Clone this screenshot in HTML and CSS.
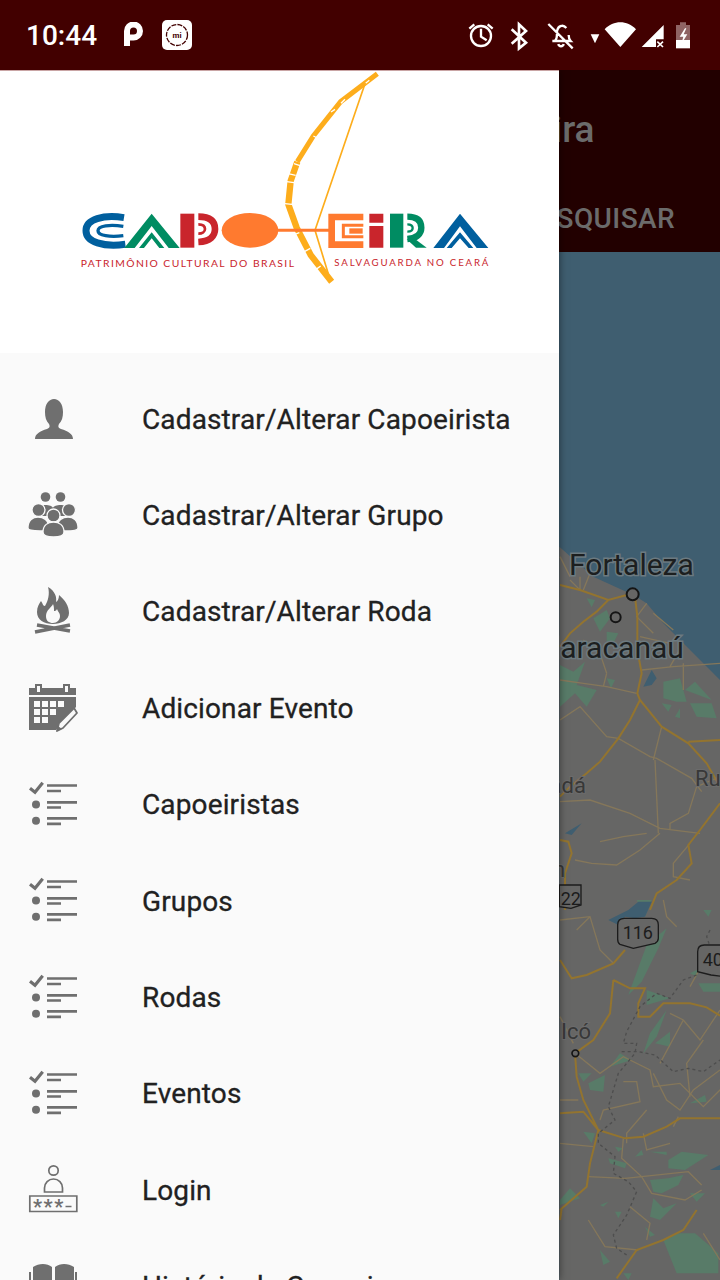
FILE: index.html
```html
<!DOCTYPE html>
<html lang="pt-BR">
  <head>
    <meta charset="UTF-8" />
    <meta name="viewport" content="width=device-width, initial-scale=1.0" />
    <title>Capoeira</title>
    <link rel="stylesheet" href="styles.css">
  </head>
  <body>
    <div class="phone">
      <!-- Status bar -->
      <div class="status-bar">
        <span class="clock">10:44</span>
        <svg class="p-icon" viewBox="0 0 20 26"><path d="M4 24V9a6.500 6.500 0 1 1 6.500 6.500H7" fill="none" stroke="#fff" stroke-width="6"/></svg>
        <svg class="mi-icon" viewBox="0 0 30 30">
          <rect width="30" height="30" rx="5" fill="#fff"/>
          <circle cx="15" cy="15" r="10.500" fill="none" stroke="#420000" stroke-width="1.300" stroke-dasharray="5 1.200"/>
          <text x="15" y="18" class="mi-text">mi</text>
        </svg>
        <svg class="status-icons" viewBox="0 0 840 210">
          <g fill="none" stroke="#fff" stroke-width="7">
            <circle cx="123" cy="108" r="30"/>
            <path d="M123 86v24l17 11M88 86l15-13M143 73l15 13"/>
            <path d="M215 88l43 40-21 17V73l21 20-43 38" stroke-width="8"/>
            <path d="M345 122c8-6 5-18 6-28 2-12 8-15 12-16 3-1 10-1 16 6M386 105c0 7 1 13 6 18H337M355 132c2 9 14 9 16 0M325 72l73 73"/>
          </g>
          <path d="M452 103h26l-13 27zM494 88c26-28 68-28 94 0l-47 53zM605 141l66-66v43h-23v23z" fill="#fff"/>
          <path d="M652 125l17 16M669 125l-17 16" stroke="#fff" stroke-width="5"/>
          <path d="M720 67h18v8h12v45h-42V75h12z" fill="#8f6464"/>
          <path d="M708 120h42v25h-42z" fill="#fff"/>
          <path d="M735 85l-16 25h11l-6 22 18-29h-11l8-18z" fill="#fff"/>
        </svg>
      </div>

      <div class="screen">
        <!-- App bar behind the drawer -->
        <header class="app-bar">
          <h1 class="app-title">Capoeira</h1>
          <div class="tabs"><span>PESQUISAR</span></div>
        </header>

        <!-- Map, already dimmed by the open drawer -->
        <svg class="map" viewBox="0 252 720 1028">
          <rect y="252" width="720" height="1028" class="map-water"/>
          <g transform="translate(550 540) scale(.33333)">
            <path d="M28 20L130 110 250 165 290 190 340 250 400 310 510 420V2300H28z" class="map-land"/>
            <g class="map-green">
              <path d="M110 175l25 5-10 22zM130 235l40-25 10 25-30 40zM170 275l35 5-15 30-20 5zM30 375l40 20 35-30-25 70 60 15-30 50-35-40-45 40zM170 415l25 5-12 25zM340 425l50-10 20 70-30 0-40-10zM405 450l30-25 50 55zM335 490l30 5-10 20zM420 490l65 0 15 45-60-5zM375 530l15-25v30z"/>
            </g>
            <path d="M280 440l25-50 15 25-15 20zM45 880l50-30-30 35z" class="map-water"/>
            <g class="map-road">
              <path d="M30 420l70 10 70 10 90 20M30 540l60-40 80 90 35 5 95 55 20 5 105 60 30 40M315 660l10 220M335 560l-25 100M275 390l95-10 140-10M400 370v80M510 710l-70 30-25 80-55 30v20M150 905l70-15 70-10M330 880l-60 50-70 45-75-5-50-10M420 910l-50 60v40l50 10M30 785l90-5 120 40 90 45 120 15M60 120l30 30v-40M170 400l-10 40M100 300l50 40 20 60M30 50l30 60M120 100l-20 50M290 190l-30 40 50 50M310 220l60 50M400 310l-40 70M270 290l90 20"/>
            </g>
            <g class="map-highway">
              <path d="M30 135l60 15 85 30 55-15h20M175 180l-35 35-40 30-40 35-30 40M255 170l7 60v100l13 70-13 60 8 20 65 80 80 50 55 60 40 70M270 480l-30 60-35 55-55 70-40 35-50 40-30 30M415 605l95-5M510 790l-60 80-35 45 10 55-45 50-60 40-20 50M30 900l25 5 10 35-20 60v110"/>
            </g>
            <g class="map-shield">
              <path d="M28 1035h65v60l-30 10-35-5z"/>
              <text x="32" y="1095">22</text>
            </g>
            <g class="map-dot">
              <circle cx="248" cy="163" r="18"/>
              <circle cx="197" cy="232" r="15"/>
            </g>
          </g>
          <g transform="translate(550 900) scale(.33333)">
            <g class="map-green">
              <path d="M290 135l60-50-25 60-50 100-40 40zM290 270l70 25-70 20zM350 330l-30 80-40 50 20-60zM315 430l45-35v45zM180 500l30-40 35 20zM85 520l40 0-25 25zM115 550l50-25-5 50-40-5zM420 610l45-25 5 20zM100 695l35 5-10 30zM195 740l25 5-15 10zM255 770l20-20 5 15zM300 755l50 0 0 10zM355 780l40-25 80 10-70 45-50-5zM175 775l55 15-5 15-45-15zM300 840l55-5 45-10-15 30-50 25-25-5zM420 880l45 0-25 25zM30 900l30-35 30 30-60 20zM150 915l25-10-15 15zM195 935l20 0-10 20zM310 895l30 30 40-15-50 50-30-10zM285 980l30 25-15 5zM340 1020l45-20 50 0 70 60v60H380zM150 1050l30 35-20 10zM220 1120l25 0-10 20z"/>
              <path d="M260 0l45 0-20 50zM460 30l25 0-10 20zM445 250l65 0v25l-50 0zM420 220l30-15-10 25z"/>
            </g>
            <path d="M175 60l60-30 30-25 40 0-20 45-30 5-30-5-20 25zM480 810l30-15v15z" class="map-water"/>
            <g class="map-road">
              <path d="M30 60l90-10 30 100 40 40M75 460l75 60 70-50 80 40 10 50 80-10 70 70 60-60M220 545l40 0 10 60-110 25-10 30M310 520l40 80 40 30 40-60 80-60M400 360l-70 130M460 420l-50 70 10 100M290 630l-60 70 0 30M30 730l100 10M30 600h55M360 340l40 20 50 60 60-90M220 715l-5 60 60 55 140-15 40 40M115 830l110 5 50-5 30 50 100 20 50-30M115 960l50 80 100 10M240 920l60 50-10 50M460 1000l50 80M280 700l10 50 70-20M370 680l15-30M340 0l10 50 30 30M120 50l-40 40M480 150l-60 110M30 350l40 80"/>
            </g>
            <g class="map-highway">
              <path d="M30 180l35 55 45-10 80-35 35-40M190 240l-5 50-5 50-50 80-55 40 5 70 20 70 45 90-25 100-10 70-80 70M190 240l50 25h45l-20 45v40h35l40-40h80l50 12 40 25M145 690l80 25 55-5 70-30 40-25h120M30 640l70-5 45 55M30 960l5-35M440 930l-40 60-60 30-80 30-60 85"/>
            </g>
            <path d="M480 90l-10 20 10 30M440 225l-40 15-40 55-40-15-50 40-40 75-10 35h40l-5 30-50 60-15 50-15 50 20 40-50 40 0 30 50 40-5 50 45 25 25 30-30 70-40 60 10 40 30 20M215 455l50 0 50 10 55 50 45-10 45 10 50-35" class="map-border"/>
            <g class="map-shield">
              <path d="M203 75q0-20 20-20h82q20 0 20 20v40q0 10-10 15l-65 15-40-12q-7-4-7-15z"/>
              <text x="218" y="118">116</text>
              <path d="M443 155q0-20 20-20h60v95l-40-5-40-10z"/>
              <text x="458" y="198">40</text>
            </g>
            <circle cx="76" cy="460" r="10" class="map-dot small"/>
          </g>
          <text x="569" y="575" class="map-city">Fortaleza</text>
          <text x="534" y="658" class="map-city">Maracanaú</text>
          <text x="695" y="786" class="map-town">Ru</text>
          <text x="506" y="793" class="map-town">Quixadá</text>
          <text x="479" y="877" class="map-town">Quixeran</text>
          <text x="561" y="1039" class="map-town">Icó</text>
        </svg>

        <!-- Navigation drawer -->
        <aside class="drawer">
          <div class="drawer-header">
            <svg class="logo" viewBox="0 0 1290 660">
              <!-- bow -->
              <path d="M922 8L812 92 730 195 682 272" fill="none" stroke="#fdad1c" stroke-width="15"/>
              <path d="M682 272L662 330 655 400 680 470 722 552 785 632" fill="none" stroke="#fdad1c" stroke-width="19"/>
              <path d="M898 28l-13 10M825 85l-12 12M795 115l-12 8M730 195l12 6M672 278l18 6M655 308l22 5M650 332l22 3M644 398l22 2M670 492l18-7M703 542l18-10M738 595l14-10" stroke="#fff" stroke-width="4"/>
              <path d="M886 35L735 478 776 612" fill="none" stroke="#fdad1c" stroke-width="5"/>
              <!-- letter shapes -->
              <g fill="none" stroke="#005f9e">
                <path d="M162 440C100 430 48 445 48 479s52 50 118 41" stroke-width="21"/>
                <path d="M160 466C120 460 84 464 84 479s36 20 76 15" stroke-width="10"/>
              </g>
              <path d="M163 531L245 428l84 103H296L245 465l-51 66z" fill="#008c62"/>
              <path d="M207 531L245 484l38 47H268L245 502l-23 29z" fill="#008c62"/>
              <path d="M331 428h42v102h-42z" fill="#c9252c"/>
              <path d="M385 437c38 0 50 16 50 37s-14 37-50 39" fill="none" stroke="#c9252c" stroke-width="20"/>
              <path d="M385 460c14 0 20 6 20 14s-8 14-20 14" fill="none" stroke="#c9252c" stroke-width="8"/>
              <ellipse cx="540" cy="478" rx="85" ry="52" fill="#ff7a2f"/>
              <path d="M620 478H780" stroke="#ff7a2f" stroke-width="9"/>
              <path d="M880 438H785V521h95" fill="none" stroke="#ff7a2f" stroke-width="20"/>
              <path d="M880 463H820V497h60" fill="none" stroke="#ff7a2f" stroke-width="9"/>
              <path d="M838 472h40v16h-40z" fill="#ff7a2f"/>
              <path d="M898 428h42v27h-42zM898 465h42v65h-42z" fill="#c9252c"/>
              <path d="M960 428h40v102h-40z" fill="#008c62"/>
              <path d="M1012 437c32 0 42 14 42 33s-14 32-42 34" fill="none" stroke="#008c62" stroke-width="19"/>
              <path d="M1012 460c10 0 16 4 16 11s-6 11-16 11" fill="none" stroke="#008c62" stroke-width="7"/>
              <path d="M1010 505h26l34 25h-32z" fill="#008c62"/>
              <path d="M1090 531L1170 428l85 103H1220L1170 466l-48 65z" fill="#005f9e"/>
              <path d="M1130 531L1170 484l40 47H1196L1170 502l-25 29z" fill="#005f9e"/>
              <text x="32" y="588" textLength="640" class="logo-text">PATRIMÔNIO CULTURAL DO BRASIL</text>
              <text x="793" y="586" textLength="462" class="logo-text-thin">SALVAGUARDA NO CEARÁ</text>
            </svg>
          </div>

          <nav class="menu">
            <a class="menu-item">
              <svg class="menu-icon" viewBox="0 0 50 50"><path d="M7 45c0-5 5-8 12-10 3-1 3-3 2-5-3-3-4-7-4-12 0-8 4-13 9-13s9 5 9 13c0 5-1 9-4 12-1 2-1 4 2 5 7 2 12 5 12 10z"/></svg>
              Cadastrar/Alterar Capoeirista
            </a>
            <a class="menu-item">
              <svg class="menu-icon" viewBox="0 0 50 50">
                <circle cx="17.500" cy="6" r="4.800"/><circle cx="32.500" cy="6" r="4.800"/>
                <path d="M10 17c1-4 14-4 15 0v8H10zM25 17c1-4 14-4 15 0v8H25z"/>
                <g stroke="#fafafa" stroke-width="1.300">
                  <circle cx="10.500" cy="19" r="6.500"/><circle cx="41" cy="19" r="6.500"/>
                  <path d="M0 37c0-8 5-11 10-11s11 3 11 11c0 2-3 3-9 3-8 0-12-1-12-3zM50 37c0-8-5-11-10-11s-11 3-11 11c0 2 3 3 9 3 8 0 12-1 12-3z"/>
                  <circle cx="25.500" cy="24.500" r="6.500"/>
                  <path d="M15 41c0-7 5-10 10.500-10S36 34 36 41c0 3-4 5-10.500 5S15 44 15 41z"/>
                </g>
              </svg>
              Cadastrar/Alterar Grupo
            </a>
            <a class="menu-item">
              <svg class="menu-icon" viewBox="0 0 50 50">
                <path fill-rule="evenodd" d="M20 0C27 4 29 10 28 15 30 14 31 11 31 8 37 13 41 19 41 26 41 33 33 37 25 37 16 37 9 33 9 25 9 20 11 17 13 14 15 17 15 19 17 19 20 14 22 7 20 0ZM25 17C24 20 18 23 18 29 18 34 21 36 25 36 29 36 32 33 32 29 32 26 30 25 29 22 28 24 27 24 26 24 26 22 26 19 25 17Z"/>
                <path d="M7 45L42 38M9 38L42 44" stroke="#6f6f6f" stroke-width="3.500"/>
              </svg>
              Cadastrar/Alterar Roda
            </a>
            <a class="menu-item">
              <svg class="menu-icon" viewBox="0 0 50 50">
                <path fill-rule="evenodd" d="M1 5h6V1h7v4h21V1h7v4h6v7H1zM9 3v6h3V3zM37 3v6h3V3zM1 14h47v10L28 47H1zM6 18v6h6v-6zM14 18v6h6v-6zM22 18v6h6v-6zM30 18v6h6v-6zM6 26v6h6v-6zM14 26v6h6v-6zM22 26v6h6v-6zM6 34v6h6v-6zM14 34v6h6v-6z"/>
                <path d="M29 48l2-8 15-15 3 5-14 15z" fill="#fafafa" stroke="#6f6f6f" stroke-width="1.800" stroke-linejoin="round"/>
                <path d="M29 48l1-5 4 3z"/>
              </svg>
              Adicionar Evento
            </a>
            <a class="menu-item">
              <svg class="menu-icon"><use href="#list-icon"/></svg>
              Capoeiristas
            </a>
            <a class="menu-item">
              <svg class="menu-icon"><use href="#list-icon"/></svg>
              Grupos
            </a>
            <a class="menu-item">
              <svg class="menu-icon"><use href="#list-icon"/></svg>
              Rodas
            </a>
            <a class="menu-item">
              <svg class="menu-icon"><use href="#list-icon"/></svg>
              Eventos
            </a>
            <a class="menu-item">
              <svg class="menu-icon" viewBox="0 0 50 50">
                <g fill="none" stroke="#6f6f6f" stroke-width="1.700">
                  <circle cx="25.500" cy="5.500" r="4.700"/>
                  <path d="M16.500 27v-4c0-5 4-9 9-9s9 4 9 9v4z"/>
                  <path d="M1.800 31h47v15.500H1.800z"/>
                </g>
                <text x="5" y="49" class="login-stars">***</text>
                <path d="M37.500 41.500h6" stroke="#6f6f6f" stroke-width="1.500"/>
              </svg>
              Login
            </a>
            <a class="menu-item">
              <svg class="menu-icon" viewBox="0 0 50 50">
                <path d="M5 5c6-4 14-4 19 0v34c-5-3-13-3-19 0zM27 5c5-4 13-4 19 0v34c-6-3-14-3-19 0zM1 10h2v32h18l4 2 4-2h18V10h2v36H1z"/>
              </svg>
              História da Capoeira
            </a>
          </nav>
        </aside>
      </div>
    </div>

    <!-- Shared checklist icon -->
    <svg class="icon-defs">
      <symbol id="list-icon" viewBox="0 0 50 50">
        <path d="M19 5.500h30M19 11h14M19 22.300h30M19 27.500h14M19 38.300h30M19 43.800h14" stroke="#6f6f6f" stroke-width="2.700"/>
        <path d="M2 8.200l5 4 7.700-9.400" fill="none" stroke="#6f6f6f" stroke-width="3.200"/>
        <circle cx="8" cy="24.500" r="4" fill="#6f6f6f"/>
        <circle cx="8" cy="40.800" r="4" fill="#6f6f6f"/>
      </symbol>
    </svg>
  </body>
</html>
```

FILE: styles.css
```css
html,
body {
  margin: 0;
  padding: 0;
}

body {
  font-family: Roboto, "Liberation Sans", sans-serif;
  background-color: #000;
}

.phone {
  width: 720px;
  height: 1280px;
  overflow: hidden;
  display: flex;
  flex-direction: column;
}

/* Status bar */
.status-bar {
  height: 70px;
  flex: none;
  background-color: #420000;
  display: flex;
  align-items: center;
  color: #fff;
}

.clock {
  font-size: 28px;
  font-weight: 500;
  margin-left: 26px;
  width: 97px;
}

.p-icon {
  width: 20px;
  height: 26px;
  margin-right: 19px;
}

.mi-icon {
  width: 30px;
  height: 30px;
  margin-top: -1px;
}

.mi-text {
  font-size: 8px;
  font-weight: 700;
  fill: #420000;
  text-anchor: middle;
}

.status-icons {
  width: 280px;
  height: 70px;
  margin-left: auto;
}

/* Screen under the status bar */
.screen {
  position: relative;
  flex: 1;
  overflow: hidden;
}

.app-bar {
  height: 182px;
  background-color: #220000;
  color: #6b6b6b;
}

.app-title {
  margin: 0;
  height: 112px;
  padding-left: 447px;
  line-height: 120px;
  font-size: 37px;
  font-weight: 500;
}

.tabs {
  display: flex;
  justify-content: flex-end;
  padding-right: 45px;
  line-height: 74px;
  font-size: 28px;
  font-weight: 500;
  letter-spacing: 0.4px;
}

/* Map */
.map {
  display: block;
  width: 720px;
  height: 1028px;
}

.map-water {
  fill: #3f5e70;
}

.map-land {
  fill: #666665;
}

.map-green {
  fill: #587b68;
}

.map-road {
  fill: none;
  stroke: #85775a;
  stroke-width: 4;
}

.map-highway {
  fill: none;
  stroke: #93742f;
  stroke-width: 6;
}

.map-border {
  fill: none;
  stroke: #4e4e4e;
  stroke-width: 4;
  stroke-dasharray: 9 9;
}

.map-dot {
  fill: #666665;
  stroke: #151515;
  stroke-width: 6;
}

.map-dot.small {
  stroke-width: 5;
}

.map-city {
  font-size: 30px;
  fill: #1c1f20;
  stroke: #6c7a80;
  stroke-width: 3px;
  paint-order: stroke;
}

.map-town {
  font-size: 22px;
  fill: #383838;
  stroke: #6c6c6c;
  stroke-width: 2px;
  paint-order: stroke;
}

.map-shield path {
  fill: #666665;
  stroke: #1c1c1c;
  stroke-width: 4;
}

.map-shield text {
  font-size: 54px;
  fill: #1c1c1c;
}

/* Navigation drawer */
.drawer {
  position: absolute;
  top: 0;
  left: 0;
  bottom: 0;
  width: 559px;
  background-color: #fafafa;
  box-shadow: 0 0 8px rgba(0, 0, 0, 0.5);
}

.drawer-header {
  height: 282px;
  background-color: #fff;
  border-top: 1px solid #c9a5a5;
}

.logo {
  display: block;
  width: 430px;
  height: 220px;
  margin-left: 70px;
}

.logo-text {
  font-family: Lato, "Liberation Sans", sans-serif;
  font-size: 31px;
  fill: #c9252c;
}

.logo-text-thin {
  font-family: Lato, "Liberation Sans", sans-serif;
  font-size: 29px;
  fill: #c9252c;
}

.menu {
  padding-top: 18px;
}

.menu-item {
  height: 96.4px;
  display: flex;
  align-items: center;
  padding-left: 28px;
  font-size: 28px;
  color: #212121;
  letter-spacing: 0.13px;
  -webkit-text-stroke: 0.3px #212121;
}

.menu-icon {
  width: 50px;
  height: 50px;
  margin-right: 64px;
  flex: none;
  fill: #6f6f6f;
  overflow: visible;
  -webkit-text-stroke: 0;
}

.login-stars {
  font-size: 20px;
  font-weight: 700;
  fill: #6f6f6f;
  letter-spacing: 1.500px;
  -webkit-text-stroke: 0;
}

.icon-defs {
  display: none;
}
```
